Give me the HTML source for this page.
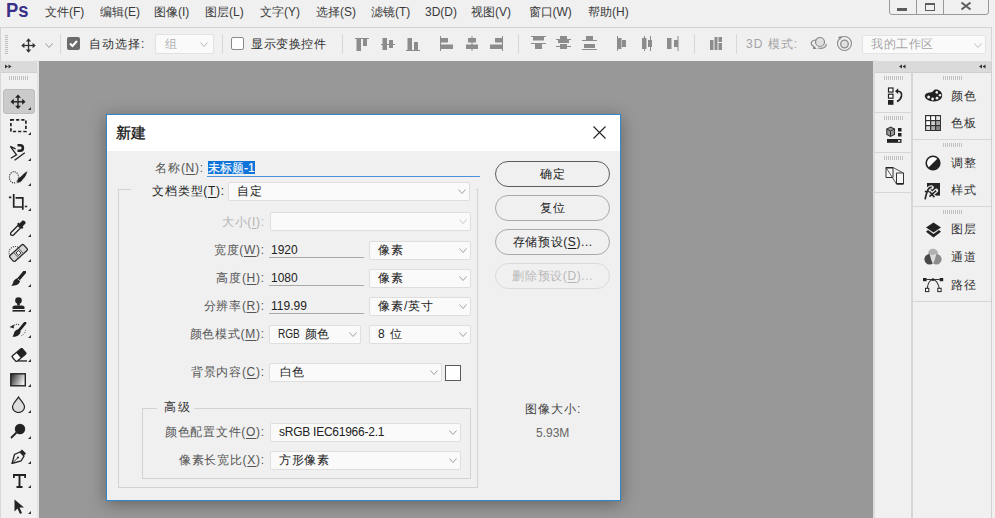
<!DOCTYPE html>
<html><head><meta charset="utf-8"><title>PS</title><style>
*{margin:0;padding:0;box-sizing:border-box}
html,body{width:995px;height:518px;overflow:hidden}
body{position:relative;background:#989898;font-family:"Liberation Sans",sans-serif;font-size:12px;color:#333}
.a{position:absolute}
.t{position:absolute;white-space:nowrap;line-height:20px}
u{text-decoration:underline;text-underline-offset:2px}
</style></head><body>

<div class="a" style="left:0px;top:0px;width:995px;height:27px;background:#f0f0f0"></div>
<div class="t" style="left:6px;top:-2px;font-size:20px;font-weight:bold;color:#3a308a;transform:scaleX(0.92);transform-origin:0 0;line-height:24px">Ps</div>
<div class="t" style="left:45px;top:2px;font-size:12px;color:#3a3a3a;">文件(F)</div>
<div class="t" style="left:100px;top:2px;font-size:12px;color:#3a3a3a;">编辑(E)</div>
<div class="t" style="left:154px;top:2px;font-size:12px;color:#3a3a3a;">图像(I)</div>
<div class="t" style="left:205px;top:2px;font-size:12px;color:#3a3a3a;">图层(L)</div>
<div class="t" style="left:260px;top:2px;font-size:12px;color:#3a3a3a;">文字(Y)</div>
<div class="t" style="left:316px;top:2px;font-size:12px;color:#3a3a3a;">选择(S)</div>
<div class="t" style="left:371px;top:2px;font-size:12px;color:#3a3a3a;">滤镜(T)</div>
<div class="t" style="left:425px;top:2px;font-size:12px;color:#3a3a3a;">3D(D)</div>
<div class="t" style="left:471px;top:2px;font-size:12px;color:#3a3a3a;">视图(V)</div>
<div class="t" style="left:528.5px;top:2px;font-size:12px;color:#3a3a3a;">窗口(W)</div>
<div class="t" style="left:588px;top:2px;font-size:12px;color:#3a3a3a;">帮助(H)</div>
<div class="a" style="left:889px;top:-3px;width:100px;height:18px;border:1px solid #999;border-radius:3px;background:#f0f0f0"></div>
<div class="a" style="left:916px;top:0px;width:1px;height:15px;background:#999"></div>
<div class="a" style="left:943px;top:0px;width:1px;height:15px;background:#999"></div>
<div class="a" style="left:897px;top:8px;width:10px;height:3px;background:#5c5c5c"></div>
<div class="a" style="left:925px;top:3px;width:10px;height:8px;border:2px solid #5c5c5c;border-width:2px 1.5px 1.5px 1.5px"></div>
<svg class="a" style="left:960px;top:1px;" width="12" height="10" viewBox="0 0 12 10"><path d="M1.5 1.5 L10.5 8.5 M10.5 1.5 L1.5 8.5" stroke="#5c5c5c" stroke-width="2"/></svg>
<div class="a" style="left:0px;top:27px;width:995px;height:34px;background:#f0f0f0"></div>
<div class="a" style="left:0px;top:27px;width:992px;height:1px;background:#d4d4d4"></div>
<div class="a" style="left:0px;top:27px;width:1px;height:33px;background:#d4d4d4"></div>
<div class="a" style="left:991px;top:27px;width:1px;height:33px;background:#d4d4d4"></div>
<svg class="a" style="left:5px;top:35px;" width="3" height="20" viewBox="0 0 3 20"><rect x="0" y="0" width="3" height="1" fill="#c0c0c0"/><rect x="0" y="2" width="3" height="1" fill="#c0c0c0"/><rect x="0" y="4" width="3" height="1" fill="#c0c0c0"/><rect x="0" y="6" width="3" height="1" fill="#c0c0c0"/><rect x="0" y="8" width="3" height="1" fill="#c0c0c0"/><rect x="0" y="10" width="3" height="1" fill="#c0c0c0"/><rect x="0" y="12" width="3" height="1" fill="#c0c0c0"/><rect x="0" y="14" width="3" height="1" fill="#c0c0c0"/><rect x="0" y="16" width="3" height="1" fill="#c0c0c0"/><rect x="0" y="18" width="3" height="1" fill="#c0c0c0"/></svg>
<svg class="a" style="left:21px;top:38px;" width="15" height="15" viewBox="0 0 15 15"><path d="M7.5 0.3 L10.2 3.4 H4.8 Z M7.5 14.7 L10.2 11.6 H4.8 Z M0.3 7.5 L3.4 4.8 V10.2 Z M14.7 7.5 L11.6 4.8 V10.2 Z" fill="#333"/><rect x="6.85" y="3" width="1.3" height="9" fill="#333"/><rect x="3" y="6.85" width="9" height="1.3" fill="#333"/></svg>
<svg class="a" style="left:45px;top:43px;" width="8" height="5" viewBox="0 0 8 5"><path d="M0.5 0.5 L4.0 4.5 L7.5 0.5" fill="none" stroke="#999" stroke-width="1"/></svg>
<div class="a" style="left:60px;top:34px;width:1px;height:20px;background:#d8d8d8"></div>
<div class="a" style="left:67px;top:37px;width:13px;height:13px;background:#6b6b6b;border-radius:2px"></div>
<svg class="a" style="left:67px;top:37px;" width="13" height="13" viewBox="0 0 13 13"><path d="M3 6.5 L5.5 9 L10 4" fill="none" stroke="#fff" stroke-width="2"/></svg>
<div class="t" style="left:89px;top:34px;font-size:12px;color:#333;letter-spacing:1px">自动选择:</div>
<div class="a" style="left:155px;top:34px;width:59px;height:20px;background:#fafafa;border:1px solid #e2e2e2;border-radius:2px"></div>
<div class="t" style="left:165px;top:34px;font-size:12px;color:#b0b0b0;">组</div>
<svg class="a" style="left:200px;top:42px;" width="8" height="5" viewBox="0 0 8 5"><path d="M0.5 0.5 L4.0 4.5 L7.5 0.5" fill="none" stroke="#b8b8b8" stroke-width="1"/></svg>
<div class="a" style="left:222px;top:34px;width:1px;height:20px;background:#d8d8d8"></div>
<div class="a" style="left:231px;top:37px;width:13px;height:13px;background:#fff;border:1px solid #8a8a8a;border-radius:2px"></div>
<div class="t" style="left:251px;top:34px;font-size:12px;color:#333;letter-spacing:0.5px">显示变换控件</div>
<div class="a" style="left:342px;top:34px;width:1px;height:20px;background:#d8d8d8"></div>
<svg class="a" style="left:355px;top:38px;" width="14" height="13" viewBox="0 0 14 13"><rect x="0" y="0" width="14" height="1" fill="#8c8c8c"/><rect x="1.5" y="1" width="4.5" height="12" fill="#8c8c8c"/><rect x="8" y="1" width="4" height="7" fill="#8c8c8c"/></svg>
<svg class="a" style="left:381px;top:38px;" width="14" height="13" viewBox="0 0 14 13"><rect x="0" y="6" width="14" height="1" fill="#8c8c8c"/><rect x="1.5" y="0" width="4.5" height="12" fill="#8c8c8c"/><rect x="8" y="2" width="4" height="8" fill="#8c8c8c"/></svg>
<svg class="a" style="left:406px;top:38px;" width="14" height="13" viewBox="0 0 14 13"><rect x="0" y="12" width="14" height="1" fill="#8c8c8c"/><rect x="1.5" y="0" width="4.5" height="12" fill="#8c8c8c"/><rect x="8" y="4" width="4" height="8" fill="#8c8c8c"/></svg>
<svg class="a" style="left:440px;top:36px;" width="13" height="15" viewBox="0 0 13 15"><rect x="0" y="0" width="1" height="15" fill="#8c8c8c"/><rect x="1" y="2" width="7" height="4.5" fill="#8c8c8c"/><rect x="1" y="8.5" width="12" height="4.5" fill="#8c8c8c"/></svg>
<svg class="a" style="left:466px;top:36px;" width="12" height="15" viewBox="0 0 12 15"><rect x="5.5" y="0" width="1" height="15" fill="#8c8c8c"/><rect x="2" y="2" width="8" height="4.5" fill="#8c8c8c"/><rect x="0" y="8.5" width="12" height="4.5" fill="#8c8c8c"/></svg>
<svg class="a" style="left:490px;top:36px;" width="13" height="15" viewBox="0 0 13 15"><rect x="12" y="0" width="1" height="15" fill="#8c8c8c"/><rect x="5" y="2" width="7" height="4.5" fill="#8c8c8c"/><rect x="0" y="8.5" width="12" height="4.5" fill="#8c8c8c"/></svg>
<div class="a" style="left:518px;top:34px;width:1px;height:20px;background:#d8d8d8"></div>
<svg class="a" style="left:531px;top:36px;" width="15" height="15" viewBox="0 0 15 15"><rect x="0" y="0" width="15" height="1" fill="#8c8c8c"/><rect x="2" y="1" width="11" height="3.5" fill="#8c8c8c"/><rect x="0" y="7" width="15" height="1" fill="#8c8c8c"/><rect x="4" y="8" width="7" height="5" fill="#8c8c8c"/></svg>
<svg class="a" style="left:556px;top:36px;" width="15" height="15" viewBox="0 0 15 15"><rect x="0" y="3" width="15" height="1" fill="#8c8c8c"/><rect x="4" y="0" width="7" height="3" fill="#8c8c8c"/><rect x="2" y="4" width="11" height="3" fill="#8c8c8c"/><rect x="0" y="10" width="15" height="1" fill="#8c8c8c"/><rect x="4" y="8" width="7" height="2" fill="#8c8c8c"/><rect x="4" y="11" width="7" height="2" fill="#8c8c8c"/></svg>
<svg class="a" style="left:582px;top:36px;" width="15" height="15" viewBox="0 0 15 15"><rect x="4" y="0" width="7" height="4" fill="#8c8c8c"/><rect x="0" y="4" width="15" height="1" fill="#8c8c8c"/><rect x="2" y="8" width="11" height="4" fill="#8c8c8c"/><rect x="0" y="13" width="15" height="1" fill="#8c8c8c"/></svg>
<svg class="a" style="left:617px;top:36px;" width="11" height="15" viewBox="0 0 11 15"><rect x="0" y="0" width="1" height="15" fill="#8c8c8c"/><rect x="1" y="2" width="3.5" height="11" fill="#8c8c8c"/><rect x="5" y="4" width="4" height="7" fill="#8c8c8c"/><rect x="9" y="0" width="1" height="15" fill="#0000"/></svg>
<svg class="a" style="left:642px;top:36px;" width="11" height="15" viewBox="0 0 11 15"><rect x="2" y="0" width="1" height="15" fill="#8c8c8c"/><rect x="0" y="2" width="4.5" height="11" fill="#8c8c8c"/><rect x="8" y="0" width="1" height="15" fill="#8c8c8c"/><rect x="6" y="4" width="4" height="7" fill="#8c8c8c"/></svg>
<svg class="a" style="left:667px;top:36px;" width="12" height="15" viewBox="0 0 12 15"><rect x="0" y="2" width="4.5" height="11" fill="#8c8c8c"/><rect x="7" y="4" width="4" height="7" fill="#8c8c8c"/><rect x="10.5" y="0" width="1" height="15" fill="#8c8c8c"/><rect x="4.5" y="0" width="1" height="15" fill="#0000"/></svg>
<div class="a" style="left:694px;top:34px;width:1px;height:20px;background:#d8d8d8"></div>
<svg class="a" style="left:710px;top:36px;" width="12" height="15" viewBox="0 0 12 15"><rect x="0" y="4" width="3.5" height="10" fill="#8c8c8c"/><rect x="4.5" y="1" width="3" height="13" fill="#8c8c8c"/><rect x="8.5" y="1" width="3.5" height="5" fill="#8c8c8c"/><rect x="8.5" y="7" width="3.5" height="7" fill="#8c8c8c"/></svg>
<div class="a" style="left:736px;top:34px;width:1px;height:20px;background:#d8d8d8"></div>
<div class="t" style="left:746px;top:34px;font-size:12px;color:#a3a3a3;letter-spacing:1px">3D 模式:</div>
<svg class="a" style="left:810px;top:36px;" width="20" height="15" viewBox="0 0 20 15"><circle cx="10" cy="6" r="4.5" fill="#e0e0e0" stroke="#8a8a8a" stroke-width="1.2"/><path d="M6 4 C1 4 0 8 3 10 M8 12 C13 13 17 11 16 8" fill="none" stroke="#8a8a8a" stroke-width="1.2"/><path d="M3 9 L7 13 L3 13 Z" fill="#8a8a8a"/></svg>
<svg class="a" style="left:836px;top:35px;" width="17" height="17" viewBox="0 0 17 17"><circle cx="8.5" cy="8.5" r="7" fill="none" stroke="#8a8a8a" stroke-width="1.1"/><circle cx="8.5" cy="9" r="3.8" fill="#e0e0e0" stroke="#8a8a8a" stroke-width="1.3"/><path d="M2 2 L6 1 L4 5 Z" fill="#8a8a8a"/></svg>
<div class="a" style="left:862px;top:35px;width:124px;height:19px;background:#fafafa;border:1px solid #e4e4e4;border-radius:2px"></div>
<div class="t" style="left:871px;top:34px;font-size:12px;color:#a6a6a6;letter-spacing:0.6px">我的工作区</div>
<svg class="a" style="left:974px;top:43px;" width="8" height="5" viewBox="0 0 8 5"><path d="M0.5 0.5 L4.0 4.5 L7.5 0.5" fill="none" stroke="#c0c0c0" stroke-width="1"/></svg>
<div class="a" style="left:0px;top:60px;width:37px;height:458px;background:#f0f0f0"></div>
<div class="a" style="left:0px;top:61px;width:37px;height:11px;background:#dadada"></div>
<div class="a" style="left:0px;top:72px;width:37px;height:1px;background:#d0d0d0"></div>
<div class="a" style="left:37px;top:60px;width:2px;height:458px;background:#e4e4e4"></div>
<div class="a" style="left:0px;top:60px;width:1px;height:458px;background:#d8d8d8"></div>
<svg class="a" style="left:5px;top:64px;" width="7" height="5" viewBox="0 0 7 5"><path d="M0 0.5 L3 2.5 L0 4.5 Z M3.5 0.5 L6.5 2.5 L3.5 4.5 Z" fill="#333"/></svg>
<svg class="a" style="left:9px;top:76px;" width="20" height="4" viewBox="0 0 20 4"><rect x="0" y="0" width="1" height="4" fill="#c2c2c2"/><rect x="2" y="0" width="1" height="4" fill="#c2c2c2"/><rect x="4" y="0" width="1" height="4" fill="#c2c2c2"/><rect x="6" y="0" width="1" height="4" fill="#c2c2c2"/><rect x="8" y="0" width="1" height="4" fill="#c2c2c2"/><rect x="10" y="0" width="1" height="4" fill="#c2c2c2"/><rect x="12" y="0" width="1" height="4" fill="#c2c2c2"/><rect x="14" y="0" width="1" height="4" fill="#c2c2c2"/><rect x="16" y="0" width="1" height="4" fill="#c2c2c2"/><rect x="18" y="0" width="1" height="4" fill="#c2c2c2"/></svg>
<div class="a" style="left:3px;top:89px;width:32px;height:25px;background:#cbcbcb;border:1px solid #bdbdbd;border-radius:3px"></div>
<div class="a" style="left:873px;top:60px;width:122px;height:458px;background:#f0f0f0"></div>
<div class="a" style="left:873px;top:60px;width:2px;height:458px;background:#dcdcdc"></div>
<div class="a" style="left:875px;top:61px;width:116px;height:11px;background:#dadada"></div>
<div class="a" style="left:875px;top:72px;width:116px;height:1px;background:#cfcfcf"></div>
<div class="a" style="left:911px;top:72px;width:2px;height:446px;background:#d6d6d6"></div>
<div class="a" style="left:991px;top:61px;width:1px;height:457px;background:#d0d0d0"></div>
<svg class="a" style="left:10px;top:94px;" width="16" height="16" viewBox="0 0 16 16"><path d="M8 0.5 L11 3.8 H5 Z M8 15 L11 11.7 H5 Z M0.5 7.8 L3.8 4.8 V10.8 Z M15.5 7.8 L12.2 4.8 V10.8 Z" fill="#222"/><rect x="7.3" y="3" width="1.4" height="9.5" fill="#222"/><rect x="3" y="7.1" width="10" height="1.4" fill="#222"/></svg>
<svg class="a" style="left:28px;top:107px;" width="3" height="3" viewBox="0 0 3 3"><path d="M3 0 L3 3 L0 3 Z" fill="#333"/></svg>
<svg class="a" style="left:10px;top:119px;" width="17" height="14" viewBox="0 0 17 14"><rect x="0.9" y="0.9" width="15" height="11.6" fill="none" stroke="#222" stroke-width="1.7" stroke-dasharray="3.2 2"/></svg>
<svg class="a" style="left:28px;top:132px;" width="3" height="3" viewBox="0 0 3 3"><path d="M3 0 L3 3 L0 3 Z" fill="#333"/></svg>
<svg class="a" style="left:8px;top:142px;" width="20" height="20" viewBox="0 0 20 20"><path d="M9.5 3.3 H12.2 A2.7 2.7 0 0 1 12.2 8.7 H9.5" fill="none" stroke="#222" stroke-width="2.6"/><path d="M2.3 4.3 L7.6 6.9 M2.3 4.3 L8.5 12.8 L2.8 16.3 M6.6 18.3 L16.8 10.8" fill="none" stroke="#222" stroke-width="1.3"/></svg>
<svg class="a" style="left:28px;top:158px;" width="3" height="3" viewBox="0 0 3 3"><path d="M3 0 L3 3 L0 3 Z" fill="#333"/></svg>
<svg class="a" style="left:8px;top:168px;" width="22" height="22" viewBox="0 0 22 22"><ellipse cx="6" cy="9.3" rx="4.6" ry="5.6" fill="none" stroke="#333" stroke-width="1.2" stroke-dasharray="1.1 1.1"/><path d="M19.8 2.5 C19 6.5 17.5 9.5 15 11.5 C14 14 12 15 8.5 15.2 C8.5 12 10 9 13 8.3 C15 5.8 17.5 3.8 19.8 2.5 Z" fill="#222" stroke="#f0f0f0" stroke-width="0.8"/></svg>
<svg class="a" style="left:28px;top:183px;" width="3" height="3" viewBox="0 0 3 3"><path d="M3 0 L3 3 L0 3 Z" fill="#333"/></svg>
<svg class="a" style="left:8px;top:192px;" width="22" height="20" viewBox="0 0 22 20"><path d="M0.9 5.3 H3.3 M5.7 2 V15 H14.8 M7.6 5.8 H14.8 V17.8 M16.8 14.5 H19.2" fill="none" stroke="#222" stroke-width="1.7"/></svg>
<svg class="a" style="left:28px;top:208px;" width="3" height="3" viewBox="0 0 3 3"><path d="M3 0 L3 3 L0 3 Z" fill="#333"/></svg>
<svg class="a" style="left:10px;top:220px;" width="16" height="16" viewBox="0 0 16 16"><path d="M12.5 0.5 A2.5 2.5 0 0 1 15.5 3.5 L12.5 6.5 L13.5 7.5 L12 9 L7 4 L8.5 2.5 L9.5 3.5 Z" fill="#222"/><path d="M8 5.5 L10.5 8 L3.5 15 C2.5 16 0.5 15 0.5 14 C0.5 13 1 12.5 1 12.5 Z" fill="none" stroke="#222" stroke-width="1.3"/></svg>
<svg class="a" style="left:28px;top:234px;" width="3" height="3" viewBox="0 0 3 3"><path d="M3 0 L3 3 L0 3 Z" fill="#333"/></svg>
<svg class="a" style="left:8px;top:242px;" width="22" height="22" viewBox="0 0 22 22"><circle cx="7.3" cy="10.8" r="6.3" fill="none" stroke="#444" stroke-width="1.1" stroke-dasharray="1.1 1.1"/><g transform="rotate(-42 10.5 11)"><rect x="1.2" y="7.2" width="18.6" height="7.6" rx="1.6" fill="#d8d8d8" stroke="#2a2a2a" stroke-width="1.3"/><path d="M7.2 7.5 V14.5 M13.8 7.5 V14.5" stroke="#555" stroke-width="0.8"/><rect x="8.7" y="9.2" width="3.6" height="3.6" fill="#f0f0f0" stroke="#333" stroke-width="0.9"/></g></svg>
<svg class="a" style="left:28px;top:259px;" width="3" height="3" viewBox="0 0 3 3"><path d="M3 0 L3 3 L0 3 Z" fill="#333"/></svg>
<svg class="a" style="left:10px;top:271px;" width="16" height="16" viewBox="0 0 16 16"><path d="M14.6 1.1 L9 7.8" stroke="#222" stroke-width="3.2" stroke-linecap="round"/><path d="M8.8 7.2 C5.8 7.2 3.6 9 3.1 11.5 C2.7 13.5 1.2 14.9 1.2 14.9 C5.6 14.9 9.6 13.6 10.3 9.3 Z" fill="#222"/><path d="M8 8 L10 9.8" stroke="#f0f0f0" stroke-width="0.8"/></svg>
<svg class="a" style="left:28px;top:284px;" width="3" height="3" viewBox="0 0 3 3"><path d="M3 0 L3 3 L0 3 Z" fill="#333"/></svg>
<svg class="a" style="left:12px;top:297px;" width="14" height="15" viewBox="0 0 14 15"><circle cx="6.5" cy="3.5" r="3.3" fill="#222"/><rect x="5.2" y="5" width="2.6" height="3.5" fill="#222"/><path d="M0.5 12 V10.5 C0.5 9 2 8.5 4 8.5 H9 C11 8.5 12.5 9 12.5 10.5 V12 Z" fill="#222"/><rect x="0.5" y="13" width="12.5" height="1.6" fill="#222"/></svg>
<svg class="a" style="left:28px;top:309px;" width="3" height="3" viewBox="0 0 3 3"><path d="M3 0 L3 3 L0 3 Z" fill="#333"/></svg>
<svg class="a" style="left:9px;top:322px;" width="18" height="16" viewBox="0 0 18 16"><path d="M16 1.2 L10.5 7.8" stroke="#222" stroke-width="2.8" stroke-linecap="round"/><path d="M10.2 7.3 C7.4 7.3 5.4 9 4.9 11.4 C4.5 13.3 3.2 14.8 3.2 14.8 C7.3 14.8 11 13.5 11.6 9.4 Z" fill="#222"/><path d="M3.5 4.5 C5 2.5 8 1.8 10.5 2.8" fill="none" stroke="#555" stroke-width="1.1" stroke-dasharray="1.2 0.8"/><path d="M0.5 5 L4.8 2.8 L4.8 6.5 Z" fill="#222"/><path d="M12.5 13.5 A6 6 0 0 0 16.5 7" fill="none" stroke="#555" stroke-width="1" stroke-dasharray="1 1"/></svg>
<svg class="a" style="left:28px;top:335px;" width="3" height="3" viewBox="0 0 3 3"><path d="M3 0 L3 3 L0 3 Z" fill="#333"/></svg>
<svg class="a" style="left:11px;top:348px;" width="16" height="14" viewBox="0 0 16 14"><g transform="rotate(-40 8 7)"><rect x="1.5" y="3.5" width="13" height="7" rx="1" fill="#fff" stroke="#222" stroke-width="1.3"/><rect x="7.5" y="3.5" width="7" height="7" fill="#222"/></g><rect x="7" y="12.3" width="9" height="1.3" fill="#222"/></svg>
<svg class="a" style="left:28px;top:359px;" width="3" height="3" viewBox="0 0 3 3"><path d="M3 0 L3 3 L0 3 Z" fill="#333"/></svg>
<svg class="a" style="left:10px;top:373px;" width="17" height="14" viewBox="0 0 17 14"><defs><linearGradient id="gg" x1="0" y1="0" x2="1" y2="0.4"><stop offset="0" stop-color="#222"/><stop offset="1" stop-color="#eee"/></linearGradient></defs><rect x="0.8" y="0.8" width="14.5" height="12" fill="url(#gg)" stroke="#222" stroke-width="1.4"/></svg>
<svg class="a" style="left:28px;top:384px;" width="3" height="3" viewBox="0 0 3 3"><path d="M3 0 L3 3 L0 3 Z" fill="#333"/></svg>
<svg class="a" style="left:12px;top:396px;" width="14" height="17" viewBox="0 0 14 17"><path d="M6.5 1 C8 4 12.5 7.5 12.5 11 A6 5.5 0 0 1 0.5 11 C0.5 7.5 5 4 6.5 1 Z" fill="#ddd" stroke="#222" stroke-width="1.2"/></svg>
<svg class="a" style="left:28px;top:410px;" width="3" height="3" viewBox="0 0 3 3"><path d="M3 0 L3 3 L0 3 Z" fill="#333"/></svg>
<svg class="a" style="left:10px;top:423px;" width="16" height="16" viewBox="0 0 16 16"><circle cx="10" cy="6" r="5.2" fill="#222"/><path d="M6.5 9.5 L1 15" stroke="#222" stroke-width="1.8"/></svg>
<svg class="a" style="left:28px;top:436px;" width="3" height="3" viewBox="0 0 3 3"><path d="M3 0 L3 3 L0 3 Z" fill="#333"/></svg>
<svg class="a" style="left:11px;top:449px;" width="16" height="15" viewBox="0 0 16 15"><path d="M11 0.5 L15 4.5 L13 6.5 L9 2.5 Z" fill="#222"/><path d="M9 3 L13 7 L10 12 L1 14.5 L3.5 5.5 Z" fill="none" stroke="#222" stroke-width="1.3"/><path d="M1.5 14 L6.5 9" stroke="#222" stroke-width="1"/><circle cx="7" cy="8.5" r="1" fill="#222"/></svg>
<svg class="a" style="left:28px;top:461px;" width="3" height="3" viewBox="0 0 3 3"><path d="M3 0 L3 3 L0 3 Z" fill="#333"/></svg>
<svg class="a" style="left:13px;top:474px;" width="13" height="14" viewBox="0 0 13 14"><path d="M0.8 4 V1 H12.2 V4 M6.5 1 V13 M3.5 13 H9.5" fill="none" stroke="#222" stroke-width="1.9"/></svg>
<svg class="a" style="left:28px;top:485px;" width="3" height="3" viewBox="0 0 3 3"><path d="M3 0 L3 3 L0 3 Z" fill="#333"/></svg>
<svg class="a" style="left:14px;top:499px;" width="11" height="16" viewBox="0 0 11 16"><path d="M0.5 0.5 V12.5 L3.5 9.5 L6 15 L8 14 L5.5 8.5 L10 8.5 Z" fill="#222"/></svg>
<svg class="a" style="left:28px;top:511px;" width="3" height="3" viewBox="0 0 3 3"><path d="M3 0 L3 3 L0 3 Z" fill="#333"/></svg>
<div class="a" style="left:875px;top:112px;width:36px;height:1px;background:#d6d6d6"></div>
<div class="a" style="left:875px;top:152px;width:36px;height:1px;background:#d6d6d6"></div>
<div class="a" style="left:875px;top:192px;width:36px;height:1px;background:#d6d6d6"></div>
<div class="a" style="left:913px;top:139px;width:78px;height:1px;background:#d6d6d6"></div>
<div class="a" style="left:913px;top:206px;width:78px;height:1px;background:#d6d6d6"></div>
<div class="a" style="left:913px;top:301px;width:78px;height:1px;background:#d6d6d6"></div>
<svg class="a" style="left:884px;top:76px;" width="19" height="4" viewBox="0 0 19 4"><rect x="0" y="0" width="1" height="4" fill="#c2c2c2"/><rect x="2" y="0" width="1" height="4" fill="#c2c2c2"/><rect x="4" y="0" width="1" height="4" fill="#c2c2c2"/><rect x="6" y="0" width="1" height="4" fill="#c2c2c2"/><rect x="8" y="0" width="1" height="4" fill="#c2c2c2"/><rect x="10" y="0" width="1" height="4" fill="#c2c2c2"/><rect x="12" y="0" width="1" height="4" fill="#c2c2c2"/><rect x="14" y="0" width="1" height="4" fill="#c2c2c2"/><rect x="16" y="0" width="1" height="4" fill="#c2c2c2"/><rect x="18" y="0" width="1" height="4" fill="#c2c2c2"/></svg>
<svg class="a" style="left:884px;top:116px;" width="19" height="4" viewBox="0 0 19 4"><rect x="0" y="0" width="1" height="4" fill="#c2c2c2"/><rect x="2" y="0" width="1" height="4" fill="#c2c2c2"/><rect x="4" y="0" width="1" height="4" fill="#c2c2c2"/><rect x="6" y="0" width="1" height="4" fill="#c2c2c2"/><rect x="8" y="0" width="1" height="4" fill="#c2c2c2"/><rect x="10" y="0" width="1" height="4" fill="#c2c2c2"/><rect x="12" y="0" width="1" height="4" fill="#c2c2c2"/><rect x="14" y="0" width="1" height="4" fill="#c2c2c2"/><rect x="16" y="0" width="1" height="4" fill="#c2c2c2"/><rect x="18" y="0" width="1" height="4" fill="#c2c2c2"/></svg>
<svg class="a" style="left:884px;top:156px;" width="19" height="4" viewBox="0 0 19 4"><rect x="0" y="0" width="1" height="4" fill="#c2c2c2"/><rect x="2" y="0" width="1" height="4" fill="#c2c2c2"/><rect x="4" y="0" width="1" height="4" fill="#c2c2c2"/><rect x="6" y="0" width="1" height="4" fill="#c2c2c2"/><rect x="8" y="0" width="1" height="4" fill="#c2c2c2"/><rect x="10" y="0" width="1" height="4" fill="#c2c2c2"/><rect x="12" y="0" width="1" height="4" fill="#c2c2c2"/><rect x="14" y="0" width="1" height="4" fill="#c2c2c2"/><rect x="16" y="0" width="1" height="4" fill="#c2c2c2"/><rect x="18" y="0" width="1" height="4" fill="#c2c2c2"/></svg>
<svg class="a" style="left:943px;top:76px;" width="19" height="4" viewBox="0 0 19 4"><rect x="0" y="0" width="1" height="4" fill="#c2c2c2"/><rect x="2" y="0" width="1" height="4" fill="#c2c2c2"/><rect x="4" y="0" width="1" height="4" fill="#c2c2c2"/><rect x="6" y="0" width="1" height="4" fill="#c2c2c2"/><rect x="8" y="0" width="1" height="4" fill="#c2c2c2"/><rect x="10" y="0" width="1" height="4" fill="#c2c2c2"/><rect x="12" y="0" width="1" height="4" fill="#c2c2c2"/><rect x="14" y="0" width="1" height="4" fill="#c2c2c2"/><rect x="16" y="0" width="1" height="4" fill="#c2c2c2"/><rect x="18" y="0" width="1" height="4" fill="#c2c2c2"/></svg>
<svg class="a" style="left:943px;top:143px;" width="19" height="4" viewBox="0 0 19 4"><rect x="0" y="0" width="1" height="4" fill="#c2c2c2"/><rect x="2" y="0" width="1" height="4" fill="#c2c2c2"/><rect x="4" y="0" width="1" height="4" fill="#c2c2c2"/><rect x="6" y="0" width="1" height="4" fill="#c2c2c2"/><rect x="8" y="0" width="1" height="4" fill="#c2c2c2"/><rect x="10" y="0" width="1" height="4" fill="#c2c2c2"/><rect x="12" y="0" width="1" height="4" fill="#c2c2c2"/><rect x="14" y="0" width="1" height="4" fill="#c2c2c2"/><rect x="16" y="0" width="1" height="4" fill="#c2c2c2"/><rect x="18" y="0" width="1" height="4" fill="#c2c2c2"/></svg>
<svg class="a" style="left:943px;top:210px;" width="19" height="4" viewBox="0 0 19 4"><rect x="0" y="0" width="1" height="4" fill="#c2c2c2"/><rect x="2" y="0" width="1" height="4" fill="#c2c2c2"/><rect x="4" y="0" width="1" height="4" fill="#c2c2c2"/><rect x="6" y="0" width="1" height="4" fill="#c2c2c2"/><rect x="8" y="0" width="1" height="4" fill="#c2c2c2"/><rect x="10" y="0" width="1" height="4" fill="#c2c2c2"/><rect x="12" y="0" width="1" height="4" fill="#c2c2c2"/><rect x="14" y="0" width="1" height="4" fill="#c2c2c2"/><rect x="16" y="0" width="1" height="4" fill="#c2c2c2"/><rect x="18" y="0" width="1" height="4" fill="#c2c2c2"/></svg>
<svg class="a" style="left:887px;top:87px;" width="16" height="18" viewBox="0 0 16 18"><rect x="1.5" y="1" width="4.5" height="4" fill="#fff" stroke="#222" stroke-width="1.2"/><rect x="1.5" y="7.2" width="4.5" height="4" fill="#fff" stroke="#222" stroke-width="1.2"/><rect x="1" y="13" width="5.5" height="4.8" fill="#222"/><path d="M10 4 C13.5 4 15 6 14.5 9 C14 11.5 12 13.5 10 14.5" fill="none" stroke="#222" stroke-width="1.6"/><path d="M8 4.2 L11.2 1.2 L11.2 7 Z" fill="#222"/></svg>
<svg class="a" style="left:886px;top:126px;" width="17" height="18" viewBox="0 0 17 18"><path d="M4.5 1 L8.5 3 V8.5 L4.5 10.5 L0.8 8.5 V3 Z" fill="#999" stroke="#333" stroke-width="1.1"/><path d="M0.8 3 L4.5 5 L8.5 3 M4.5 5 V10.5" fill="none" stroke="#333" stroke-width="1"/><rect x="12" y="2" width="3.5" height="3.5" fill="#222"/><rect x="12" y="7" width="3.5" height="3.5" fill="#222"/><rect x="1" y="13" width="14.5" height="3.8" fill="#222"/><rect x="12" y="14" width="2.2" height="1.8" fill="#ddd"/></svg>
<svg class="a" style="left:884px;top:165px;" width="22" height="22" viewBox="0 0 22 22"><path d="M2 2.5 H9 V12.5 H2 Z" fill="#f8f8f8" stroke="#333" stroke-width="1"/><path d="M12.5 8 H19.5 V19 H12.5 Z" fill="#f8f8f8" stroke="#333" stroke-width="1"/><path d="M2 2.5 L12.5 19 M9 2.5 L19.5 8" fill="none" stroke="#444" stroke-width="0.9"/><path d="M2 2.8 H9 M12.5 18.7 H19.5" stroke="#222" stroke-width="1.4"/></svg>
<svg class="a" style="left:924px;top:89px;" width="19" height="13" viewBox="0 0 19 13"><path d="M0.8 7 C0.8 4.5 4 3.5 7.5 3.2 C9 3 9.5 1 11 0.6 C15 0.2 18.2 3 18.2 6.5 C18.2 10 14.5 12.4 10 12.4 C5 12.4 0.8 10 0.8 7 Z" fill="#222"/><circle cx="4.6" cy="8" r="1.5" fill="#f0f0f0"/><circle cx="8.6" cy="10" r="1.4" fill="#f0f0f0"/><circle cx="13" cy="9.2" r="1.4" fill="#f0f0f0"/><circle cx="16" cy="6.3" r="1.3" fill="#f0f0f0"/><circle cx="12.8" cy="3.4" r="1.3" fill="#f0f0f0"/></svg>
<div class="t" style="left:951px;top:86px;font-size:12px;color:#333;letter-spacing:1px">颜色</div>
<svg class="a" style="left:925px;top:115px;" width="16" height="16" viewBox="0 0 16 16"><rect x="0" y="0" width="16" height="16" fill="#333"/><rect x="1.2" y="1.2" width="3.8" height="3.8" fill="#fff"/><rect x="6.2" y="1.2" width="3.8" height="3.8" fill="#fff"/><rect x="11.2" y="1.2" width="3.8" height="3.8" fill="#e8e8e8"/><rect x="1.2" y="6.2" width="3.8" height="3.8" fill="#fff"/><rect x="6.2" y="6.2" width="3.8" height="3.8" fill="#ccc"/><rect x="11.2" y="6.2" width="3.8" height="3.8" fill="#aaa"/><rect x="1.2" y="11.2" width="3.8" height="3.8" fill="#ddd"/><rect x="6.2" y="11.2" width="3.8" height="3.8" fill="#aaa"/><rect x="11.2" y="11.2" width="3.8" height="3.8" fill="#888"/></svg>
<div class="t" style="left:951px;top:113px;font-size:12px;color:#333;letter-spacing:1px">色板</div>
<svg class="a" style="left:925px;top:155px;" width="16" height="16" viewBox="0 0 16 16"><circle cx="8" cy="8" r="6.8" fill="#fff" stroke="#222" stroke-width="1.6"/><path d="M12.8 3.2 A6.8 6.8 0 0 1 3.2 12.8 Z" fill="#222"/></svg>
<div class="t" style="left:951px;top:153px;font-size:12px;color:#333;letter-spacing:1px">调整</div>
<svg class="a" style="left:922px;top:181px;" width="20" height="20" viewBox="0 0 20 20"><rect x="5" y="2" width="13" height="12.6" fill="#262626"/><path d="M4 8 L10 17 H4 Z" fill="#f0f0f0"/><path d="M3.1 18.3 C4 14 5.3 8.8 6.9 7.3 C7.8 6.4 8.8 6.1 9.8 6.4 M2.8 10.5 H7.5 M7.8 10.8 L12.4 16.3 M14.2 9.6 C12.5 10.8 9.8 13.8 7.5 15.7" fill="none" stroke="#f0f0f0" stroke-width="4" stroke-linecap="round"/><path d="M3.1 18.3 C4 14 5.3 8.8 6.9 7.3 C7.8 6.4 8.8 6.1 9.8 6.4 M2.8 10.5 H7.5 M7.8 10.8 L12.4 16.3 M14.2 9.6 C12.5 10.8 9.8 13.8 7.5 15.7" fill="none" stroke="#262626" stroke-width="1.7"/></svg>
<div class="t" style="left:951px;top:180px;font-size:12px;color:#333;letter-spacing:1px">样式</div>
<svg class="a" style="left:925px;top:222px;" width="17" height="17" viewBox="0 0 17 17"><path d="M8.5 0.5 L16 5.5 L8.5 10.5 L1 5.5 Z" fill="#222"/><path d="M3 8 L1 9.8 L8.5 15.5 L16 9.8 L14 8 L8.5 12 Z" fill="#222"/></svg>
<div class="t" style="left:951px;top:219px;font-size:12px;color:#333;letter-spacing:1px">图层</div>
<svg class="a" style="left:924px;top:248px;" width="18" height="18" viewBox="0 0 18 18"><circle cx="9" cy="5.8" r="5" fill="#b0b0b0"/><circle cx="5.6" cy="11.3" r="5.2" fill="#484848"/><circle cx="12.4" cy="11.3" r="5.2" fill="#8c8c8c"/><path d="M5.5 5.5 Q9 8 12.5 5.5 Q11 12 9 16 Q7 12 5.5 5.5 Z" fill="#dcdcdc"/></svg>
<div class="t" style="left:951px;top:247px;font-size:12px;color:#333;letter-spacing:1px">通道</div>
<svg class="a" style="left:922px;top:277px;" width="22" height="16" viewBox="0 0 22 16"><path d="M4.5 2.5 H17.6" stroke="#333" stroke-width="1"/><path d="M11 2.5 C7.5 3 6 6 5.2 11.2 M11 2.5 C14.5 3 16 6 17.3 11.2" fill="none" stroke="#333" stroke-width="1.1"/><rect x="1" y="1" width="3.6" height="3.2" fill="#222"/><rect x="17.6" y="1" width="3.6" height="3.2" fill="#222"/><circle cx="11" cy="2.6" r="1.3" fill="#222"/><rect x="3.5" y="11.3" width="3.3" height="3.3" fill="#fff" stroke="#222" stroke-width="1"/><rect x="15.8" y="11.3" width="3.3" height="3.3" fill="#fff" stroke="#222" stroke-width="1"/></svg>
<div class="t" style="left:951px;top:275px;font-size:12px;color:#333;letter-spacing:1px">路径</div>
<svg class="a" style="left:899px;top:64px;" width="7" height="5" viewBox="0 0 7 5"><path d="M3 0.5 L0 2.5 L3 4.5 Z M6.5 0.5 L3.5 2.5 L6.5 4.5 Z" fill="#333"/></svg>
<svg class="a" style="left:979px;top:64px;" width="7" height="5" viewBox="0 0 7 5"><path d="M3 0.5 L0 2.5 L3 4.5 Z M6.5 0.5 L3.5 2.5 L6.5 4.5 Z" fill="#333"/></svg>
<div class="a" style="left:106px;top:114px;width:515px;height:387px;background:#f0f0f0;border:1px solid #2f87c9;box-shadow:0 3px 16px rgba(0,0,0,0.35)"></div>
<div class="a" style="left:107px;top:115px;width:513px;height:36px;background:#fff"></div>
<div class="t" style="left:116px;top:123px;font-size:15px;color:#111;line-height:20px;-webkit-text-stroke:0.3px #111">新建</div>
<svg class="a" style="left:593px;top:126px;" width="13" height="13" viewBox="0 0 13 13"><path d="M0.5 0.5 L12.5 12.5 M12.5 0.5 L0.5 12.5" stroke="#222" stroke-width="1.1"/></svg>
<div class="a" style="left:118px;top:189px;width:360px;height:299px;border:1px solid #d3d3d3"></div>
<div class="a" style="left:131px;top:183px;width:345px;height:12px;background:#f0f0f0"></div>
<div class="a" style="left:142px;top:408px;width:329px;height:71px;border:1px solid #d3d3d3"></div>
<div class="a" style="left:157px;top:402px;width:37px;height:12px;background:#f0f0f0"></div>
<div class="t" style="right:791.3px;top:158px;font-size:12px;color:#555;letter-spacing:0.7px;">名称(<u>N</u>):</div>
<div class="t" style="right:770.3px;top:181px;font-size:12px;color:#222;letter-spacing:0.7px;">文档类型(<u>T</u>):</div>
<div class="t" style="right:730.3px;top:212px;font-size:12px;color:#b4b4b4;letter-spacing:0.7px;">大小(<u>I</u>):</div>
<div class="t" style="right:730.3px;top:240px;font-size:12px;color:#555;letter-spacing:0.7px;">宽度(<u>W</u>):</div>
<div class="t" style="right:730.3px;top:268px;font-size:12px;color:#555;letter-spacing:0.7px;">高度(<u>H</u>):</div>
<div class="t" style="right:730.3px;top:296px;font-size:12px;color:#555;letter-spacing:0.7px;">分辨率(<u>R</u>):</div>
<div class="t" style="right:730.3px;top:324px;font-size:12px;color:#555;letter-spacing:0.7px;">颜色模式(<u>M</u>):</div>
<div class="t" style="right:730.3px;top:362px;font-size:12px;color:#555;letter-spacing:0.7px;">背景内容(<u>C</u>):</div>
<div class="t" style="left:164px;top:397px;font-size:12px;color:#333;letter-spacing:1.5px">高级</div>
<div class="t" style="right:730.3px;top:422px;font-size:12px;color:#555;letter-spacing:0.7px;">颜色配置文件(<u>O</u>):</div>
<div class="t" style="right:730.3px;top:450px;font-size:12px;color:#555;letter-spacing:0.7px;">像素长宽比(<u>X</u>):</div>
<div class="a" style="left:207px;top:176px;width:273px;height:1px;background:#4d8fe0"></div>
<div class="a" style="left:208px;top:161px;width:47px;height:13px;background:#0f74d8"></div>
<div class="t" style="left:208px;top:158px;font-size:12px;color:#fff;-webkit-text-stroke:0.15px #fff">未标题-1</div>
<div class="a" style="left:228px;top:182px;width:242px;height:19px;background:#fafafa;border:1px solid #dedede;border-radius:2px"></div>
<div class="t" style="left:237px;top:181px;font-size:12px;color:#222;letter-spacing:0.5px">自定</div>
<svg class="a" style="left:458px;top:189px;" width="8" height="5" viewBox="0 0 8 5"><path d="M0.5 0.5 L4.0 4.5 L7.5 0.5" fill="none" stroke="#a0a0a0" stroke-width="1"/></svg>
<div class="a" style="left:270px;top:212px;width:201px;height:19px;background:#fafafa;border:1px solid #dedede;border-radius:2px"></div>
<svg class="a" style="left:459px;top:219px;" width="8" height="5" viewBox="0 0 8 5"><path d="M0.5 0.5 L4.0 4.5 L7.5 0.5" fill="none" stroke="#c8c8c8" stroke-width="1"/></svg>
<div class="a" style="left:269px;top:257px;width:95px;height:1px;background:#a9a9a9"></div>
<div class="t" style="left:271px;top:240px;font-size:12px;color:#222;">1920</div>
<div class="a" style="left:269px;top:285px;width:95px;height:1px;background:#a9a9a9"></div>
<div class="t" style="left:271px;top:268px;font-size:12px;color:#222;">1080</div>
<div class="a" style="left:269px;top:313px;width:95px;height:1px;background:#a9a9a9"></div>
<div class="t" style="left:271px;top:296px;font-size:12px;color:#222;">119.99</div>
<div class="a" style="left:369px;top:241px;width:102px;height:19px;background:#fafafa;border:1px solid #dedede;border-radius:2px"></div>
<div class="t" style="left:378px;top:240px;font-size:12px;color:#222;letter-spacing:1.0px">像素</div>
<svg class="a" style="left:459px;top:248px;" width="8" height="5" viewBox="0 0 8 5"><path d="M0.5 0.5 L4.0 4.5 L7.5 0.5" fill="none" stroke="#a0a0a0" stroke-width="1"/></svg>
<div class="a" style="left:369px;top:269px;width:102px;height:19px;background:#fafafa;border:1px solid #dedede;border-radius:2px"></div>
<div class="t" style="left:378px;top:268px;font-size:12px;color:#222;letter-spacing:1.0px">像素</div>
<svg class="a" style="left:459px;top:276px;" width="8" height="5" viewBox="0 0 8 5"><path d="M0.5 0.5 L4.0 4.5 L7.5 0.5" fill="none" stroke="#a0a0a0" stroke-width="1"/></svg>
<div class="a" style="left:369px;top:297px;width:102px;height:19px;background:#fafafa;border:1px solid #dedede;border-radius:2px"></div>
<div class="t" style="left:378px;top:296px;font-size:12px;color:#222;letter-spacing:1.0px">像素/英寸</div>
<svg class="a" style="left:459px;top:304px;" width="8" height="5" viewBox="0 0 8 5"><path d="M0.5 0.5 L4.0 4.5 L7.5 0.5" fill="none" stroke="#a0a0a0" stroke-width="1"/></svg>
<div class="a" style="left:369px;top:325px;width:102px;height:19px;background:#fafafa;border:1px solid #dedede;border-radius:2px"></div>
<div class="t" style="left:378px;top:324px;font-size:12px;color:#222;letter-spacing:1.0px">8 位</div>
<svg class="a" style="left:459px;top:332px;" width="8" height="5" viewBox="0 0 8 5"><path d="M0.5 0.5 L4.0 4.5 L7.5 0.5" fill="none" stroke="#a0a0a0" stroke-width="1"/></svg>
<div class="a" style="left:269px;top:325px;width:92px;height:19px;background:#fafafa;border:1px solid #dedede;border-radius:2px"></div>
<svg class="a" style="left:349px;top:332px;" width="8" height="5" viewBox="0 0 8 5"><path d="M0.5 0.5 L4.0 4.5 L7.5 0.5" fill="none" stroke="#a0a0a0" stroke-width="1"/></svg>
<div class="t" style="left:278px;top:324px;font-size:12px;color:#222;transform:scaleX(0.84);transform-origin:0 0">RGB</div>
<div class="t" style="left:305px;top:324px;font-size:12px;color:#222;letter-spacing:0.3px">颜色</div>
<div class="a" style="left:269px;top:363px;width:173px;height:19px;background:#fafafa;border:1px solid #dedede;border-radius:2px"></div>
<div class="t" style="left:280px;top:362px;font-size:12px;color:#222;letter-spacing:0.0px">白色</div>
<svg class="a" style="left:430px;top:370px;" width="8" height="5" viewBox="0 0 8 5"><path d="M0.5 0.5 L4.0 4.5 L7.5 0.5" fill="none" stroke="#a0a0a0" stroke-width="1"/></svg>
<div class="a" style="left:445px;top:365px;width:16px;height:16px;background:#fff;border:1px solid #5a5a5a"></div>
<div class="a" style="left:270px;top:423px;width:191px;height:19px;background:#fafafa;border:1px solid #dedede;border-radius:2px"></div>
<div class="t" style="left:279px;top:422px;font-size:12px;color:#222;letter-spacing:-0.25px">sRGB IEC61966-2.1</div>
<svg class="a" style="left:449px;top:430px;" width="8" height="5" viewBox="0 0 8 5"><path d="M0.5 0.5 L4.0 4.5 L7.5 0.5" fill="none" stroke="#a0a0a0" stroke-width="1"/></svg>
<div class="a" style="left:270px;top:451px;width:191px;height:19px;background:#fafafa;border:1px solid #dedede;border-radius:2px"></div>
<div class="t" style="left:279px;top:450px;font-size:12px;color:#222;letter-spacing:0.5px">方形像素</div>
<svg class="a" style="left:449px;top:458px;" width="8" height="5" viewBox="0 0 8 5"><path d="M0.5 0.5 L4.0 4.5 L7.5 0.5" fill="none" stroke="#a0a0a0" stroke-width="1"/></svg>
<div class="a" style="left:495px;top:161px;width:115px;height:26px;border:1px solid #5c5c5c;border-radius:13px;text-align:center;line-height:24px;font-size:12px;color:#222;letter-spacing:1px;text-indent:1px">确定</div>
<div class="a" style="left:495px;top:195px;width:115px;height:26px;border:1px solid #a9a9a9;border-radius:13px;text-align:center;line-height:24px;font-size:12px;color:#222;letter-spacing:1px;text-indent:1px">复位</div>
<div class="a" style="left:495px;top:229px;width:115px;height:26px;border:1px solid #a9a9a9;border-radius:13px;text-align:center;line-height:24px;font-size:12px;color:#222;letter-spacing:0.6px;text-indent:0.6px">存储预设(<u>S</u>)...</div>
<div class="a" style="left:495px;top:263px;width:115px;height:26px;border:1px solid #dadada;border-radius:13px;text-align:center;line-height:24px;font-size:12px;color:#b9b9b9;letter-spacing:0.6px;text-indent:0.6px">删除预设(<u>D</u>)...</div>
<div class="t" style="left:525px;top:399px;font-size:12px;color:#444;letter-spacing:1px">图像大小:</div>
<div class="t" style="left:536px;top:423px;font-size:12px;color:#666;">5.93M</div>
</body></html>
